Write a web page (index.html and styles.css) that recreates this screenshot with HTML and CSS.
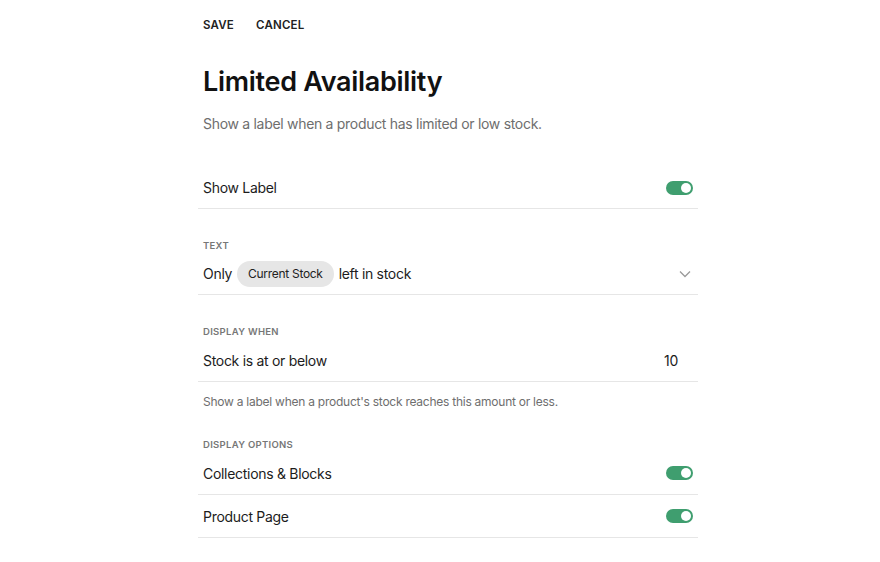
FILE: index.html
```html
<!DOCTYPE html>
<html lang="en">
<head>
  <meta charset="UTF-8">
  <meta name="viewport" content="width=device-width, initial-scale=1.0">
  <title>Limited Availability</title>
  <link rel="stylesheet" href="styles.css">
</head>
<body>
  <div id="panel">
    <div class="actions">
      <div class="action">Save</div>
      <div class="action">Cancel</div>
    </div>

    <h1 class="title">Limited Availability</h1>
    <p class="subtitle">Show a label when a product has limited or low stock.</p>

    <div class="row">
      <span>Show Label</span>
      <div class="toggle on"></div>
    </div>

    <div class="section-label">Text</div>
    <div class="row">
      <span class="text-line">Only <span class="pill">Current Stock</span> left in stock</span>
      <svg class="chevron" width="12" height="8" viewBox="0 0 12 8">
        <path d="M1 1.5 L6 6.5 L11 1.5" fill="none" stroke="#9a9a9a" stroke-width="1.3"/>
      </svg>
    </div>

    <div class="section-label">Display When</div>
    <div class="row tall">
      <span>Stock is at or below</span>
      <span class="value">10</span>
    </div>
    <p class="help">Show a label when a product's stock reaches this amount or less.</p>

    <div class="section-label">Display Options</div>
    <div class="row tall">
      <span>Collections &amp; Blocks</span>
      <div class="toggle on"></div>
    </div>
    <div class="row tall">
      <span>Product Page</span>
      <div class="toggle on"></div>
    </div>
  </div>
</body>
</html>
```

FILE: styles.css
```css
body {
  margin: 0;
  background-color: #fff;
  color: #1c1c1c;
  font-family: Inter, "Noto Sans", Arial, sans-serif;
}

#panel {
  width: 500px;
  margin-left: 198px;
}

.actions {
  display: flex;
  gap: 22px;
  padding: 18px 5px 0;
}

.action {
  font-size: 11.5px;
  line-height: 15px;
  font-weight: 600;
  text-transform: uppercase;
  letter-spacing: 0.2px;
  color: #222;
  cursor: pointer;
}

.title {
  margin: 33px 0 0;
  padding: 0 5px;
  font-size: 27px;
  line-height: 32px;
  font-weight: 600;
  letter-spacing: -0.3px;
  color: #111;
}

.subtitle {
  margin: 16px 0 0;
  padding: 0 5px;
  font-size: 14px;
  line-height: 20px;
  letter-spacing: -0.3px;
  color: #6e6e6e;
}

.row {
  display: flex;
  justify-content: space-between;
  align-items: center;
  box-sizing: border-box;
  height: 42px;
  padding: 0 5px;
  border-bottom: 1px solid #e6e6e6;
  font-size: 14px;
  letter-spacing: -0.3px;
}

.row.tall {
  height: 43px;
}

.subtitle + .row {
  margin-top: 33px;
}

.section-label {
  margin-top: 30px;
  padding: 0 5px;
  font-size: 9.5px;
  line-height: 14px;
  font-weight: 600;
  text-transform: uppercase;
  letter-spacing: 0.3px;
  color: #777;
}

.help + .section-label {
  margin-top: 28px;
}

.text-line {
  display: flex;
  align-items: center;
  gap: 5px;
}

.pill {
  display: inline-block;
  height: 26px;
  line-height: 26px;
  padding: 0 11px;
  border-radius: 13px;
  background-color: #e6e6e6;
  font-size: 12px;
  letter-spacing: -0.3px;
  color: #222;
}

.chevron {
  margin-right: 2px;
}

.value {
  margin-right: 15px;
}

.help {
  margin: 12px 0 0;
  padding: 0 5px;
  font-size: 12px;
  line-height: 16px;
  letter-spacing: -0.25px;
  color: #6e6e6e;
}

.toggle {
  position: relative;
  width: 27px;
  height: 14px;
  border-radius: 7px;
  background-color: #ccc;
  cursor: pointer;
}

.toggle.on {
  background-color: #3f9e6f;
}

.toggle::after {
  content: "";
  position: absolute;
  top: 2px;
  left: 2px;
  width: 10px;
  height: 10px;
  border-radius: 50%;
  background-color: #fff;
}

.toggle.on::after {
  left: 15px;
}
```
